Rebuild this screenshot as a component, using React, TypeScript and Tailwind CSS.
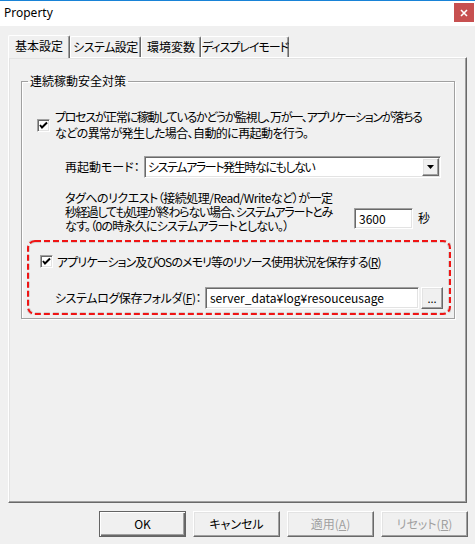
import React from "react";

const raised =
  "border border-t-white border-l-white border-r-[#696969] border-b-[#696969] shadow-[inset_-1px_-1px_0_#a0a0a0,inset_1px_1px_0_#e3e3e3]";
const sunken =
  "border border-t-[#a0a0a0] border-l-[#a0a0a0] border-r-white border-b-white shadow-[inset_1px_1px_0_#696969,inset_-1px_-1px_0_#e3e3e3]";

function CheckBox() {
  return (
    <div className={`w-[13px] h-[13px] bg-white shrink-0 flex items-center justify-center ${sunken}`}>
      <svg width="9" height="9" viewBox="0 0 9 9">
        <path d="M1 4 L3 6.5 L8 1.5" fill="none" stroke="#000" strokeWidth="2" />
      </svg>
    </div>
  );
}

function Btn({ label, def, disabled }: { label: React.ReactNode; def?: boolean; disabled?: boolean }) {
  const cls = def
    ? "border border-[#646464] shadow-[inset_1px_1px_0_#ffffff,inset_-1px_-1px_0_#696969,inset_-2px_-2px_0_#a0a0a0]"
    : raised;
  return (
    <div
      className={`w-[87px] h-[26px] flex items-center justify-center text-[12px] leading-[14px] bg-[#f0f0f0] ${cls} ${
        disabled ? "text-[#a0a0a0]" : "text-black"
      }`}
    >
      {label}
    </div>
  );
}

function Tab({ label, w, selected, track }: { label: string; w: number; selected?: boolean; track?: string }) {
  return (
    <div
      style={{ width: w }}
      className={`flex items-center justify-center whitespace-nowrap text-[12px] leading-[14px] bg-[#f0f0f0] rounded-t-[2px] border-t border-l border-r border-t-white border-l-white border-r-[#696969] shadow-[inset_-1px_0_0_#a0a0a0] ${
        track ?? ""
      } ${selected ? "h-[23px] relative z-10 -mb-[1px] pb-[2px]" : "h-[21px]"}`}
    >
      {label}
    </div>
  );
}

export default function App() {
  return (
    <div className="w-[475px] h-[544px] bg-[#f0f0f0] border-t border-[#1883d7] flex flex-col text-black overflow-hidden font-['Noto_Sans_CJK_JP','Noto_Sans',sans-serif] [font-feature-settings:'palt']">
      {/* title bar */}
      <div className="h-[25px] bg-white flex items-start justify-between">
        <span className="pl-[4px] pt-[5px] text-[12px] leading-[14px] font-['Noto_Sans',sans-serif]">Property</span>
        <div className="w-[20px] h-[19px] mt-[2px] mr-[1px] bg-[#c75050] flex items-center justify-center">
          <svg width="8" height="8" viewBox="0 0 8 8">
            <path d="M1 1 L7 7 M7 1 L1 7" stroke="#fff" strokeWidth="1.6" />
          </svg>
        </div>
      </div>

      <div className="flex flex-col pl-[8px] pt-[8px]">
        {/* tabs */}
        <div className="flex items-end h-[23px]">
          <Tab label="基本設定" w={62} selected />
          <Tab label="システム設定" w={71} track="tracking-[-0.5px]" />
          <Tab label="環境変数" w={60} />
          <Tab label="ディスプレイモード" w={88} track="tracking-[-1px]" />
        </div>

        {/* tab panel */}
        <div className={`w-[459px] h-[446px] ${raised} flex flex-col`}>
          <fieldset className="ml-[12px] mt-[16px] w-[434px] border border-[#a0a0a0] shadow-[1px_1px_0_#ffffff,inset_1px_1px_0_#ffffff] flex flex-col pb-[3px]">
            <legend className="ml-[6px] px-[2px] text-[12px] leading-[14px]">連続稼動安全対策</legend>

            <div className="flex items-center pl-[15px] mt-[21px]">
              <CheckBox />
              <div className="ml-[5px] text-[12px] leading-[16px] whitespace-nowrap">
                <div className="tracking-[-1.3px]">プロセスが正常に稼動しているかどうか監視し、万が一、アプリケーションが落ちる</div>
                <div className="tracking-[-0.6px]">などの異常が発生した場合、自動的に再起動を行う。</div>
              </div>
            </div>

            <div className="flex items-center pl-[43px] mt-[15px]">
              <span className="w-[79px] text-[12px] leading-[14px] whitespace-nowrap">再起動モード：</span>
              <div className={`w-[297px] h-[22px] bg-white flex items-center justify-between ${sunken}`}>
                <span className="pl-[3px] text-[12px] leading-[14px] tracking-[-1.4px] whitespace-nowrap">
                  システムアラート発生時なにもしない
                </span>
                <div className={`w-[17px] h-[18px] mr-[1px] bg-[#f0f0f0] flex items-center justify-center ${raised}`}>
                  <svg width="7" height="4" viewBox="0 0 7 4">
                    <path d="M0 0 H7 L3.5 4 Z" fill="#000" />
                  </svg>
                </div>
              </div>
            </div>

            <div className="flex items-start pl-[43px] mt-[13px]">
              <div className="w-[289px] text-[12px] leading-[14px] whitespace-nowrap">
                <div className="tracking-[-0.5px]">タグへのリクエスト（接続処理/Read/Writeなど）が一定</div>
                <div className="tracking-[-1.2px]">秒経過しても処理が終わらない場合、システムアラートとみ</div>
                <div className="tracking-[-0.75px]">なす。（0の時永久にシステムアラートとしない。）</div>
              </div>
              <div className={`w-[59px] h-[21px] mt-[17px] bg-white flex items-center pl-[4px] text-[12px] leading-[14px] ${sunken}`}>
                3600
              </div>
              <span className="ml-[5px] mt-[20px] text-[12px] leading-[14px]">秒</span>
            </div>

            <div className="relative ml-[5px] mr-[3px] mt-[7px] h-[75px] flex flex-col px-[2px] py-[2px]">
              <svg className="absolute inset-0 pointer-events-none" width="424" height="75" viewBox="0 0 424 75">
                <rect x="1" y="1" width="422" height="73" rx="7" fill="none" stroke="rgba(0,0,0,0.12)" strokeWidth="4" strokeDasharray="6 3" />
                <rect x="1" y="1" width="422" height="73" rx="7" fill="none" stroke="#f01414" strokeWidth="2" strokeDasharray="6 3" />
              </svg>
              <div className="flex items-center pl-[11px] mt-[12px]">
                <CheckBox />
                <span className="ml-[4px] text-[12px] leading-[15px] tracking-[-0.9px] whitespace-nowrap">
                  アプリケーション及びOSのメモリ等のリソース使用状況を保存する(<span className="underline">R</span>)
                </span>
              </div>
              <div className="flex items-center pl-[26px] mt-[18px]">
                <span className="w-[150px] text-[12px] leading-[14px] tracking-[-0.4px] whitespace-nowrap">
                  システムログ保存フォルダ(<span className="underline">F</span>)：
                </span>
                <div className={`w-[214px] h-[22px] bg-white flex items-center pl-[4px] text-[12px] leading-[14px] ${sunken}`}>
                  server_data¥log¥resouceusage
                </div>
                <div className={`w-[22px] h-[22px] ml-[2px] bg-[#f0f0f0] flex items-center justify-center text-[11px] leading-[12px] ${raised}`}>
                  ...
                </div>
              </div>
            </div>
          </fieldset>
        </div>

        {/* buttons */}
        <div className="flex justify-end gap-[7px] mt-[8px] pr-[7px]">
          <Btn label="OK" def />
          <Btn label="キャンセル" />
          <Btn label={<>適用(<span className="underline">A</span>)</>} disabled />
          <Btn label={<>リセット(<span className="underline">R</span>)</>} disabled />
        </div>
      </div>
    </div>
  );
}
